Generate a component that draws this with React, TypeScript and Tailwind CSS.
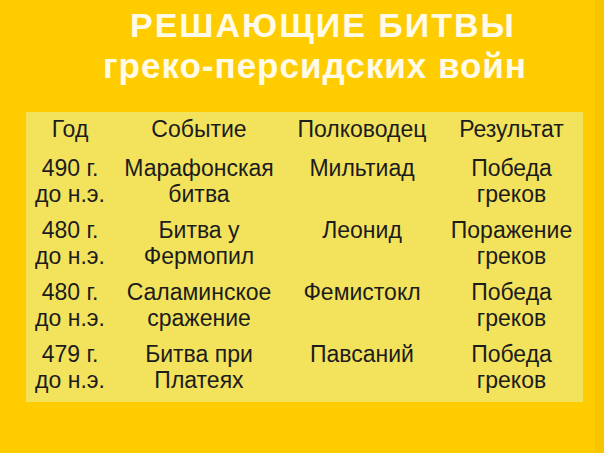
const rows: [string[], string[], string[], string[]][] = [
  [["490 г.", "до н.э."], ["Марафонская", "битва"], ["Мильтиад"], ["Победа", "греков"]],
  [["480 г.", "до н.э."], ["Битва у", "Фермопил"], ["Леонид"], ["Поражение", "греков"]],
  [["480 г.", "до н.э."], ["Саламинское", "сражение"], ["Фемистокл"], ["Победа", "греков"]],
  [["479 г.", "до н.э."], ["Битва при", "Платеях"], ["Павсаний"], ["Победа", "греков"]],
];

const headers = ["Год", "Событие", "Полководец", "Результат"];

function Cell({ lines }: { lines: string[] }) {
  return (
    <div className="flex flex-col items-center">
      {lines.map((l) => (
        <div key={l} className="whitespace-nowrap">
          {l}
        </div>
      ))}
    </div>
  );
}

export default function App() {
  return (
    <div
      className="flex h-[453px] w-[604px] overflow-hidden bg-[#ffcc00]"
      style={{ fontFamily: '"Liberation Sans", Arial, sans-serif' }}
    >
      <div className="flex flex-1 flex-col">
        {/* Title */}
        <div className="pt-[5px] font-bold text-[#fffbe8]">
          <div className="pl-[130px] text-[34px] leading-[40px] tracking-[2px]">РЕШАЮЩИЕ БИТВЫ</div>
          <div className="pl-[103px] text-[35px] leading-[42px] tracking-[1px]">греко-персидских войн</div>
        </div>

        {/* Table */}
        <div className="ml-[26px] mt-[25px] w-[557px] bg-[#f3e35c] pb-[4px] text-[23px] leading-[26px] text-[#1c1c1c]">
          <div className="grid grid-cols-[88px_170px_156px_143px] pt-[4px] pb-[8px]">
            {headers.map((h) => (
              <div key={h} className="text-center">
                {h}
              </div>
            ))}
          </div>
          {rows.map((r, i) => (
            <div key={i} className="grid grid-cols-[88px_170px_156px_143px] py-[5px]">
              {r.map((c, j) => (
                <Cell key={j} lines={c} />
              ))}
            </div>
          ))}
        </div>
      </div>
      <div className="w-[9px] bg-[#f7c400]" />
    </div>
  );
}
